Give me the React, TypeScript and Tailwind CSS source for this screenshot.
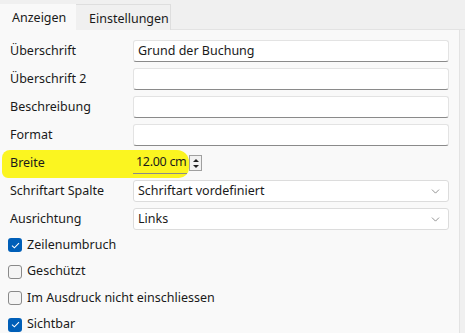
import { ChevronDown } from 'lucide-react';

const font = { fontFamily: '"Noto Sans", "Open Sans", sans-serif' };

function TextRow({ label, value = '' }: { label: string; value?: string }) {
  return (
    <div className="flex items-center h-[28px]">
      <div className="w-[123px]">{label}</div>
      <div className="w-[316px] h-[22px] bg-white border border-[#e3e3e3] border-b-[#8a8a8a] rounded-[3px] pl-[4px] flex items-center">
        {value}
      </div>
    </div>
  );
}

function SelectRow({ label, value }: { label: string; value: string }) {
  return (
    <div className="flex items-center h-[28px]">
      <div className="w-[123px]">{label}</div>
      <div className="w-[316px] h-[22px] bg-white border border-[#dcdcdc] rounded-[3px] pl-[4px] pr-[6px] flex items-center justify-between">
        <span>{value}</span>
        <ChevronDown size={13} strokeWidth={1.2} className="text-[#5a5a5a]" />
      </div>
    </div>
  );
}

function Check({ label, checked }: { label: string; checked?: boolean }) {
  return (
    <div className="flex items-center h-[26.5px] gap-[5px]">
      {checked ? (
        <div className="w-[14px] h-[14px] rounded-[3px] bg-[#005fb8] flex items-center justify-center">
          <svg width="9" height="7" viewBox="0 0 9 7">
            <path d="M1 3.6 L3.4 5.8 L8 1.2" fill="none" stroke="white" strokeWidth="1.1" />
          </svg>
        </div>
      ) : (
        <div className="w-[14px] h-[14px] rounded-[3px] border border-[#8a8a8a] bg-[#f5f5f5]" />
      )}
      <span>{label}</span>
    </div>
  );
}

export default function App() {
  return (
    <div className="w-[465px] h-[333px] bg-[#f0f0f0] overflow-hidden text-[12.5px] text-[#1a1a1a]" style={font}>
      {/* tabs */}
      <div className="flex h-[30px] pt-[4px]">
        <div className="w-[76px] bg-[#f9f9f9] pl-[12px] pt-[3px] flex items-center">Anzeigen</div>
        <div className="w-[95px] border-t border-r border-[#dedede] pl-[13px] pt-[3px] flex items-center">Einstellungen</div>
        <div className="flex-1 border-b border-[#e3e3e3]" />
      </div>

      {/* panel */}
      <div className="relative w-[460px] h-[303px] bg-[#f9f9f9] border-r border-[#e3e3e3] pl-[10px] pt-[7px]">
        <div className="absolute left-[2px] top-[120px] w-[187px] h-[28px] bg-[#fbf520] rounded-[8px_12px_10px_6px]" />
        <div className="relative">
          <TextRow label="Überschrift" value="Grund der Buchung" />
          <TextRow label="Überschrift 2" />
          <TextRow label="Beschreibung" />
          <TextRow label="Format" />
          <div className="flex items-center h-[28px]">
            <div className="w-[123px]">Breite</div>
            <div className="w-[54px] h-[22px] border-b border-[#8a8a8a] pl-[3px] flex items-center whitespace-nowrap tracking-[-0.3px]">12.00 cm</div>
            <div className="ml-[2px] w-[13px] h-[16px] border border-[#a0a0a0] bg-[#f2f2f2] flex flex-col items-center justify-center gap-[3px]">
              <div className="w-0 h-0 border-l-[3px] border-r-[3px] border-b-[3px] border-l-transparent border-r-transparent border-b-[#222]" />
              <div className="w-0 h-0 border-l-[3px] border-r-[3px] border-t-[3px] border-l-transparent border-r-transparent border-t-[#222]" />
            </div>
          </div>
          <SelectRow label="Schriftart Spalte" value="Schriftart vordefiniert" />
          <SelectRow label="Ausrichtung" value="Links" />
          <div className="-ml-[2px] -mt-[1px]">
            <Check label="Zeilenumbruch" checked />
            <Check label="Geschützt" />
            <Check label="Im Ausdruck nicht einschliessen" />
            <Check label="Sichtbar" checked />
          </div>
        </div>
      </div>
    </div>
  );
}
